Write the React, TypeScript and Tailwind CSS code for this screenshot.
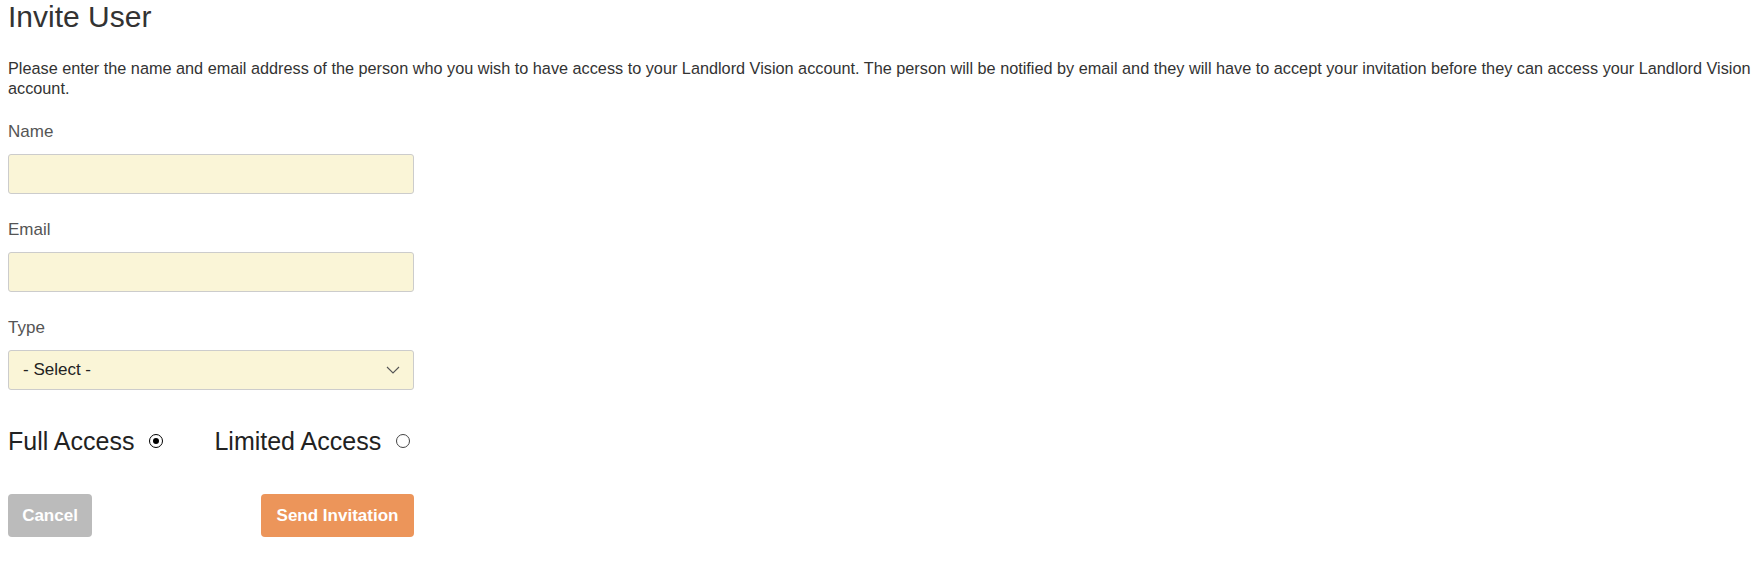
import React from "react";

function Field({ label, children }: { label: string; children: React.ReactNode }) {
  return (
    <div className="mb-[26px]">
      <div className="text-[17px] leading-[20px] text-[#555] mb-3">{label}</div>
      {children}
    </div>
  );
}

export default function App() {
  return (
    <div
      className="pl-2 pr-1 text-[#333] bg-white min-h-[566px] flow-root"
      style={{ fontFamily: '"Liberation Sans", Arial, sans-serif' }}
    >
      <h2 className="m-0 text-[30px] leading-[33px] font-normal">Invite User</h2>
      <p className="mt-[26px] mb-[24px] text-[16.25px] leading-[19.5px]">
        Please enter the name and email address of the person who you wish to have access to your Landlord Vision account. The person will be notified by email and they will have to accept your invitation before they can access your Landlord Vision account.
      </p>

      <Field label="Name">
        <div className="w-[406px] h-[40px] bg-[#faf5d7] border border-[#cccccc] rounded-[3px]" />
      </Field>
      <Field label="Email">
        <div className="w-[406px] h-[40px] bg-[#faf5d7] border border-[#cccccc] rounded-[3px]" />
      </Field>
      <Field label="Type">
        <div className="w-[406px] h-[40px] bg-[#faf5d7] border border-[#cccccc] rounded-[3px] flex items-center justify-between pl-[14px] pr-[13px]">
          <span className="text-[17px] text-[#222]">- Select -</span>
          <svg width="14" height="8" viewBox="0 0 14 8" fill="none">
            <path d="M1 1L7 7L13 1" stroke="#555" strokeWidth="1.1" />
          </svg>
        </div>
      </Field>

      <div className="mt-[37px] flex items-center text-[25px] leading-[28px] text-[#222]">
        <span>Full Access</span>
        <span className="ml-[15px] w-[14px] h-[14px] rounded-full border-[1.5px] border-black flex items-center justify-center">
          <span className="w-[6px] h-[6px] rounded-full bg-black" />
        </span>
        <span className="ml-[51px]">Limited Access</span>
        <span className="ml-[15px] w-[14px] h-[14px] rounded-full border border-[#444]" />
      </div>

      <div className="mt-[39px] w-[406px] flex justify-between">
        <button className="h-[43px] w-[84px] rounded-[4px] bg-[#bbbbbb] text-white font-bold text-[17px]">
          Cancel
        </button>
        <button className="h-[43px] w-[153px] rounded-[4px] bg-[#ec955a] text-white font-bold text-[17px]">
          Send Invitation
        </button>
      </div>
    </div>
  );
}
